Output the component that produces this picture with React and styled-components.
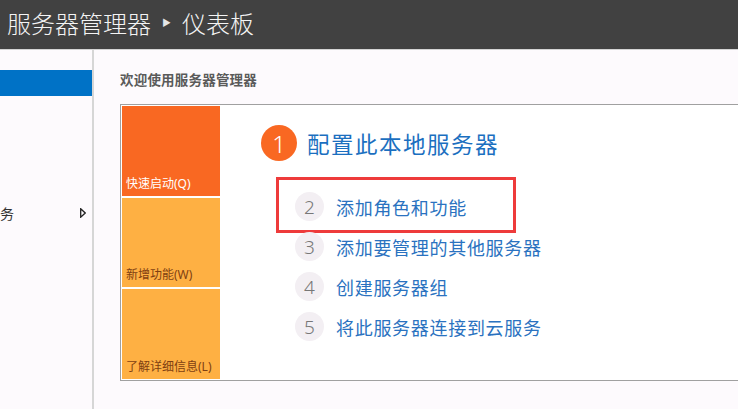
import React from "react";
import styled, { createGlobalStyle } from "styled-components";

const GlobalStyle = createGlobalStyle`
  html, body {
    margin: 0;
    padding: 0;
    height: 100%;
    overflow: hidden;
    background: #fdfafd;
  }
  #root {
    height: 100%;
  }
  * {
    box-sizing: border-box;
  }
`;

const FONT = `"Noto Sans", "Open Sans", "Noto Sans CJK SC", sans-serif`;

const Page = styled.div`
  display: flex;
  flex-direction: column;
  height: 409px;
  font-family: ${FONT};
`;

const Header = styled.header`
  height: 50px;
  flex-shrink: 0;
  background: #414141;
  border-bottom: 1px solid #d4d4d4;
  display: flex;
  align-items: center;
  padding: 0 0 4px 7px;
  color: #f4f4f4;
  font-size: 24px;
  font-weight: 300;
`;

const Crumb = styled.span`
  font-size: 9px;
  margin: 0 11px 0 11px;
  color: #e6e6e6;
`;

const Body = styled.div`
  flex: 1;
  display: flex;
  min-height: 0;
`;

const Sidebar = styled.nav`
  width: 94px;
  flex-shrink: 0;
  border-right: 2px solid #d6d6d6;
  padding-top: 20px;
  display: flex;
  flex-direction: column;
`;

const NavItem = styled.div`
  height: 26px;
  display: flex;
  align-items: center;
  justify-content: space-between;
  padding-right: 6px;
  font-size: 14px;
  color: #333;
  background: ${(p) => (p.$active ? "#0072c6" : "transparent")};
  margin-top: ${(p) => p.$gap || 0}px;
`;

const Arrow = styled.svg`
  width: 6px;
  height: 10px;
`;

const Main = styled.main`
  flex: 1;
  padding: 19px 0 0 26px;
  overflow: hidden;
`;

const Welcome = styled.h1`
  margin: 0 0 17px;
  height: 18px;
  font-size: 13.5px;
  font-weight: 700;
  color: #5a5a5a;
  letter-spacing: 0.2px;
`;

const Panel = styled.section`
  width: 700px;
  height: 277px;
  border: 1px solid #a0a0a0;
  background: #fff;
  padding: 1px;
  display: flex;
`;

const Tiles = styled.div`
  width: 98px;
  display: flex;
  flex-direction: column;
  gap: 2px;
`;

const Tile = styled.div`
  flex: 1;
  background: ${(p) => (p.$primary ? "#f96822" : "#feb043")};
  color: ${(p) => (p.$primary ? "#fff" : "#7e3f12")};
  font-size: 12px;
  display: flex;
  align-items: flex-end;
  padding: 0 0 4px 4px;
`;

const Steps = styled.div`
  flex: 1;
  padding: 18px 0 0 41px;
  display: flex;
  flex-direction: column;
`;

const MainStep = styled.div`
  display: flex;
  align-items: center;
  gap: 10px;
  height: 38px;
  margin-bottom: 30px;
`;

const Circle = styled.span`
  width: ${(p) => (p.$big ? 36 : 29)}px;
  height: ${(p) => (p.$big ? 36 : 29)}px;
  border-radius: 50%;
  flex-shrink: 0;
  display: flex;
  align-items: center;
  justify-content: center;
  background: ${(p) => (p.$big ? "#f96822" : "#f3eff3")};
  color: ${(p) => (p.$big ? "#fff" : "#777")};
  font-size: ${(p) => (p.$big ? 24 : 19)}px;
  font-weight: 300;
`;

const MainLabel = styled.span`
  font-size: 22.5px;
  color: #1b6fc0;
  letter-spacing: 1.5px;
`;

const StepList = styled.div`
  display: flex;
  flex-direction: column;
  gap: 11px;
  padding-left: 34px;
`;

const Step = styled.div`
  position: relative;
  display: flex;
  align-items: center;
  gap: 12px;
  height: 29px;

  ${(p) =>
    p.$marked &&
    `
    &::after {
      content: "";
      position: absolute;
      left: -19px;
      top: -15px;
      width: 234px;
      height: 50px;
      border: 3px solid #ee3b3b;
      pointer-events: none;
    }
  `}
`;

const StepLabel = styled.span`
  font-size: 18px;
  color: #2a72c0;
  letter-spacing: 0.7px;
`;

const steps = [
  "添加角色和功能",
  "添加要管理的其他服务器",
  "创建服务器组",
  "将此服务器连接到云服务",
];

export default function App() {
  return (
    <Page>
      <GlobalStyle />
      <Header>
        服务器管理器
        <Crumb>▶</Crumb>
        仪表板
      </Header>
      <Body>
        <Sidebar>
          <NavItem $active />
          <NavItem $gap={104}>
            <span>务</span>
            <Arrow viewBox="0 0 6 10">
              <path d="M0.7 0.8 L5.2 5 L0.7 9.2 Z" fill="none" stroke="#222" strokeWidth="1.3" />
            </Arrow>
          </NavItem>
        </Sidebar>
        <Main>
          <Welcome>欢迎使用服务器管理器</Welcome>
          <Panel>
            <Tiles>
              <Tile $primary>快速启动(Q)</Tile>
              <Tile>新增功能(W)</Tile>
              <Tile>了解详细信息(L)</Tile>
            </Tiles>
            <Steps>
              <MainStep>
                <Circle $big>1</Circle>
                <MainLabel>配置此本地服务器</MainLabel>
              </MainStep>
              <StepList>
                {steps.map((s, i) => (
                  <Step key={s} $marked={i === 0}>
                    <Circle>{i + 2}</Circle>
                    <StepLabel>{s}</StepLabel>
                  </Step>
                ))}
              </StepList>
            </Steps>
          </Panel>
        </Main>
      </Body>
    </Page>
  );
}
